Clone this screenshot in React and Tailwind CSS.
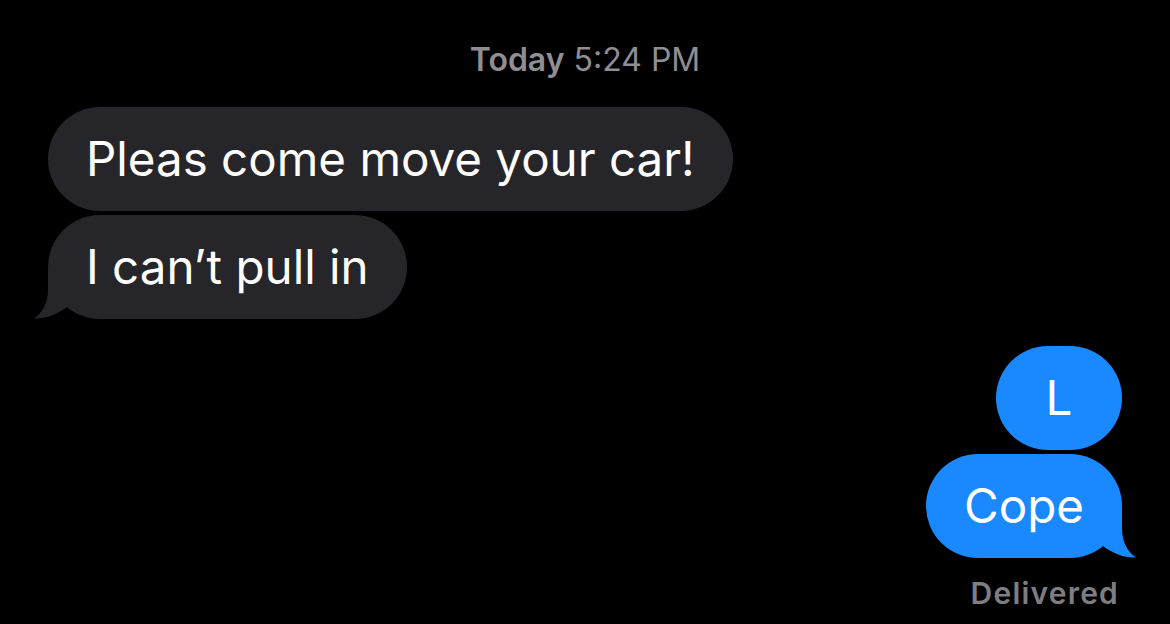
const font = { fontFamily: 'Inter, "Noto Sans", sans-serif' };

function Tail({ side, color }) {
  // little curl that hangs off the last bubble of a group
  if (side === 'left') {
    return (
      <svg className="absolute -left-4 bottom-0" width="40" height="52" viewBox="0 0 40 52">
        <path d="M16,2 L16,22 C16,37 10,46 2,51.5 C14,52 26,47 35,40 L38,10 Z" fill={color} />
      </svg>
    );
  }
  return (
    <svg className="absolute -right-4 bottom-0" width="40" height="52" viewBox="0 0 40 52">
      <path d="M24,2 L24,22 C24,37 30,46 38,51.5 C26,52 14,47 5,40 L2,10 Z" fill={color} />
    </svg>
  );
}

function Bubble({ text, side, tail, className = '' }) {
  const incoming = side === 'left';
  const color = incoming ? '#262529' : '#1a88fe';
  return (
    <div
      className={`relative flex h-[104px] items-center rounded-full px-[38px] text-[47.5px] text-white ${
        incoming ? 'self-start bg-[#262529]' : 'self-end bg-[#1a88fe]'
      } ${className}`}
    >
      {tail && <Tail side={side} color={color} />}
      <span className="relative leading-none">{text}</span>
    </div>
  );
}

export default function App() {
  return (
    <div className="flex h-[624px] w-[1170px] flex-col overflow-hidden bg-black px-12" style={font}>
      <div className="mt-[41px] text-center text-[32px] leading-[38px] text-[#8e8e93]">
        <span className="font-semibold">Today</span> 5:24 PM
      </div>

      <div className="mt-[28px] flex flex-col gap-1">
        <Bubble side="left" text="Pleas come move your car!" />
        <Bubble side="left" text="I can’t pull in" tail />
      </div>

      <div className="mt-[27px] flex flex-col gap-1">
        <Bubble side="right" text="L" className="w-[126px] justify-center !px-0" />
        <Bubble side="right" text="Cope" tail />
      </div>

      <div className="mt-[17px] self-end pr-[3px] text-[30px] font-semibold leading-[36px] tracking-[0.04em] text-[#7d7d82]">
        Delivered
      </div>
    </div>
  );
}
